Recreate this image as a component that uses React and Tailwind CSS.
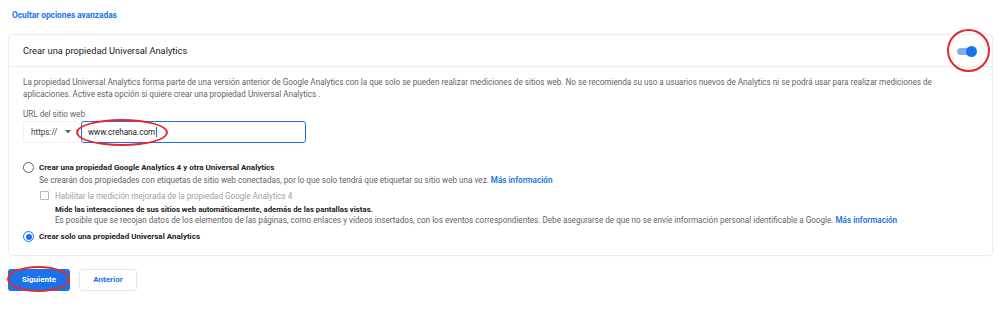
import React from "react";

const Ring = ({ className }) => (
  <div className={`pointer-events-none absolute rounded-[50%] border-2 border-[#e8262b] ${className}`} />
);

const App = () => {
  return (
    <div className="relative h-[309px] w-[1002px] overflow-hidden bg-white font-['Roboto',sans-serif] text-[#3c4043]">
      {/* Link */}
      <div className="pl-[12px] pt-[10px] text-[8.3px] font-bold leading-[11px] text-[#1a73e8]">
        Ocultar opciones avanzadas
      </div>

      {/* Card */}
      <div className="ml-[8px] mt-[13px] w-[985px] rounded-[4px] border border-[#ececec] shadow-[0_0_2px_rgba(0,0,0,0.04)]">
        <div className="flex h-[32px] items-center justify-between border-b border-[#ececec] pl-[14px] pr-[14px]">
          <span className="text-[9.3px] text-[#202124]">Crear una propiedad Universal Analytics</span>
          <div className="relative mr-[1px] h-[8px] w-[20px]">
            <div className="absolute left-0 top-[1px] h-[7px] w-[18px] rounded-full bg-[#7fb1f0]" />
            <div className="absolute right-0 top-[-1px] h-[11px] w-[11px] rounded-full bg-[#1a73e8]" />
          </div>
        </div>

        <div className="px-[14px] pb-[13px] pt-[9px]">
          <p className="text-[8.15px] leading-[12px] text-[#5f6368]">
            La propiedad Universal Analytics forma parte de una versión anterior de Google Analytics con la que solo se pueden realizar mediciones de sitios web. No se recomienda su uso a usuarios nuevos de Analytics ni se podrá usar para realizar mediciones de aplicaciones. Active esta opción si quiere crear una propiedad Universal Analytics .
          </p>

          <div className="mt-[9px] text-[8.15px] leading-[10px] text-[#5f6368]">URL del sitio web</div>
          <div className="mt-[2px] flex items-center gap-[2px]">
            <div className="flex h-[22px] w-[56px] items-center justify-between rounded-[3px] border border-[#f1f1f1] px-[7px] text-[8.15px] text-[#3c4043]">
              <span>https://</span>
              <svg width="6" height="4" viewBox="0 0 6 4"><path d="M0 0h6L3 3.5z" fill="#5f6368" /></svg>
            </div>
            <div className="flex h-[22px] w-[225px] items-center rounded-[3px] border border-[#1a73e8] px-[6px] text-[8.15px] text-[#202124]">
              www.crehana.com<span className="ml-px inline-block h-[10px] w-px bg-[#1a73e8]" />
            </div>
          </div>

          {/* Option 1 */}
          <div className="mt-[20px] flex gap-[5px]">
            <div className="mt-[-1px] h-[11px] w-[11px] shrink-0 rounded-full border border-[#5f6368]" />
            <div>
              <div className="text-[8px] font-bold leading-[10px] text-[#202124]">
                Crear una propiedad Google Analytics 4 y otra Universal Analytics
              </div>
              <div className="mt-[2px] text-[8.15px] leading-[10px] text-[#5f6368]">
                Se crearán dos propiedades con etiquetas de sitio web conectadas, por lo que solo tendrá que etiquetar su sitio web una vez.{" "}
                <span className="font-semibold text-[#1a73e8]">Más información</span>
              </div>
              <div className="mt-[6px] flex gap-[6px]">
                <div className="ml-px mt-[-0.5px] h-[9px] w-[9px] shrink-0 rounded-[1px] border border-[#b7b7b7]" />
                <div>
                  <div className="text-[8.15px] leading-[10px] text-[#9aa0a6]">
                    Habilitar la medición mejorada de la propiedad Google Analytics 4
                  </div>
                  <div className="mt-[4px] text-[7.8px] font-bold leading-[10px] text-[#202124]">
                    Mide las interacciones de sus sitios web automáticamente, además de las pantallas vistas.
                  </div>
                  <div className="text-[8.15px] leading-[10px] text-[#5f6368]">
                    Es posible que se recojan datos de los elementos de las páginas, como enlaces y vídeos insertados, con los eventos correspondientes. Debe asegurarse de que no se envíe información personal identificable a Google.{" "}
                    <span className="font-semibold text-[#1a73e8]">Más información</span>
                  </div>
                </div>
              </div>
            </div>
          </div>

          {/* Option 2 */}
          <div className="mt-[6px] flex items-center gap-[5px]">
            <div className="flex h-[11px] w-[11px] shrink-0 items-center justify-center rounded-full border border-[#1a73e8]">
              <div className="h-[6px] w-[6px] rounded-full bg-[#1a73e8]" />
            </div>
            <div className="text-[8px] font-bold leading-[10px] text-[#202124]">
              Crear solo una propiedad Universal Analytics
            </div>
          </div>
        </div>
      </div>

      {/* Buttons */}
      <div className="ml-[8px] mt-[13px] flex gap-[9px]">
        <button className="h-[22px] w-[62px] rounded-[3px] bg-[#1a73e8] text-[8px] font-bold text-white">Siguiente</button>
        <button className="h-[22px] w-[58px] rounded-[3px] border border-[#e6e6e6] bg-white text-[8px] font-bold text-[#1a73e8]">Anterior</button>
      </div>

      {/* Annotation rings */}
      <Ring className="left-[947px] top-[29px] h-[43px] w-[43px]" />
      <Ring className="left-[76px] top-[119px] h-[27px] w-[92px]" />
      <Ring className="left-[7px] top-[266px] h-[26px] w-[63px]" />
    </div>
  );
};

export default App;
